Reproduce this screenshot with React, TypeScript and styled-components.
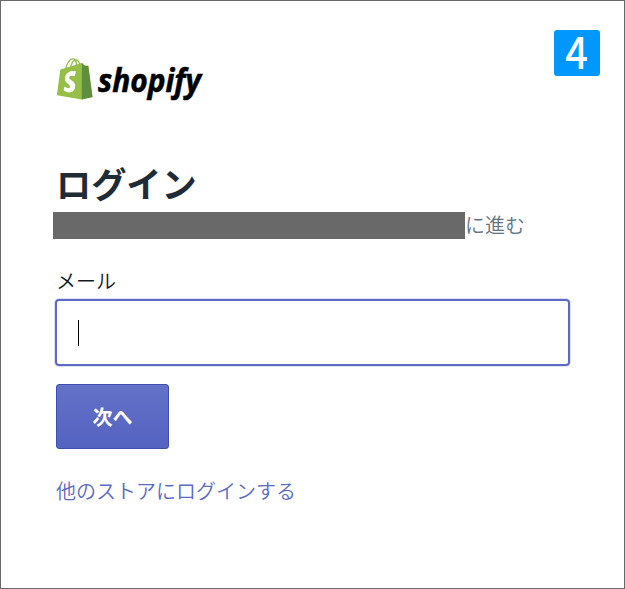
import React from "react";
import styled, { createGlobalStyle } from "styled-components";

const GlobalStyle = createGlobalStyle`
  *, *::before, *::after { box-sizing: border-box; }
  body { margin: 0; background: #fff; }
  button, input { font: inherit; }
`;

const Page = styled.main`
  position: relative;
  display: flex;
  flex-direction: column;
  align-items: flex-start;
  width: 625px;
  height: 589px;
  padding: 56px 54px 0 55px;
  border: 1px solid #696969;
  overflow: hidden;
  background: #fff;
  color: #212b36;
  font-family: "Noto Sans CJK JP", sans-serif;
  font-size: 20px;
  line-height: 28px;
`;

const StepBadge = styled.div`
  position: absolute;
  top: 29px;
  left: 553px;
  display: flex;
  align-items: center;
  justify-content: center;
  width: 46px;
  height: 46px;
  border-radius: 3px;
  background: #0098ff;
  color: #fff;
`;

const StepNumber = styled.span`
  margin-top: -7px;
  font-family: "Noto Sans CJK JP", sans-serif;
  font-weight: 500;
  font-size: 44px;
  line-height: 46px;
  transform: scaleX(0.9);
`;

const Brand = styled.svg`
  display: block;
  width: 150px;
  height: 46px;
  overflow: visible;
`;

const Title = styled.h1`
  margin: 56px 0 0;
  font-size: 35.2px;
  font-weight: 700;
  line-height: 48px;
`;

const Account = styled.div`
  display: flex;
  align-items: center;
  height: 27px;
  margin: 5px 0 0 -3px;
  color: #637381;
  font-weight: 350;
  line-height: 26px;
`;

const AccountText = styled.span`
  margin-top: -2px;
`;

const Redacted = styled.span`
  width: 412px;
  height: 27px;
  background: #696969;
`;

const Label = styled.label`
  margin-top: 28px;
  font-weight: 350;
  color: #101820;
`;

const EmailField = styled.div`
  display: flex;
  align-items: center;
  width: 515px;
  height: 67px;
  margin: 4px 0 0 -1px;
  padding: 0 21px;
  border: 2px solid #5c6ac4;
  border-radius: 4px;
  box-shadow: 0 0 0 1px #dfe1f3;
`;

const Caret = styled.span`
  width: 1px;
  height: 26px;
  background: #000;
`;

const NextButton = styled.button`
  width: 113px;
  height: 65px;
  margin-top: 18px;
  padding: 0;
  border: 1px solid #3f4eae;
  border-radius: 3px;
  background: linear-gradient(to bottom, #6371c7, #5563c1);
  box-shadow: inset 0 1px 0 #6774c8;
  color: #fff;
  font-weight: 700;
  line-height: 28px;
`;

const StoreLink = styled.a`
  margin-top: 28px;
  color: #5c6ac4;
  font-weight: 350;
  text-decoration: none;
`;

function ShopifyLogo() {
  return (
    <Brand viewBox="0 0 150 46" role="img" aria-label="shopify">
      <g transform="translate(1 1.2) scale(.327 .333)">
        <path
          fill="#95bf47"
          fillRule="evenodd"
          d="M95.9 23.9c-.1-.6-.6-1-1.1-1-.5 0-9.3-.2-9.3-.2s-7.4-7.2-8.1-7.9c-.7-.7-2.2-.5-2.7-.3 0 0-1.4.4-3.7 1.1-.4-1.3-1-2.8-1.8-4.4-2.6-5-6.5-7.7-11.1-7.7-.3 0-.6 0-1 .1-.1-.2-.3-.3-.4-.5-2-2.2-4.6-3.2-7.7-3.1-6 .2-12 4.5-16.8 12.2-3.4 5.4-6 12.2-6.7 17.5-6.9 2.1-11.7 3.6-11.8 3.7-3.5 1.1-3.6 1.2-4 4.5C9.4 40.4 0 111.2 0 111.2l75.6 13.1 33.2-8.1S96 24.5 95.9 23.9zM67.2 16.8c-1.7.5-3.7 1.1-5.9 1.8 0-3-.4-7.3-1.8-10.9 4.7.8 6.9 6 7.7 9.1zM57.2 19.9c-4 1.2-8.4 2.6-12.8 3.9 1.2-4.7 3.6-9.4 6.4-12.5 1.1-1.1 2.6-2.4 4.3-3.2 1.8 3.6 2.1 8.5 2.1 11.8zM49.1 4c1.4 0 2.6.3 3.6.9-1.6.8-3.2 2.1-4.7 3.6-3.8 4.1-6.7 10.5-7.9 16.6-3.6 1.1-7.2 2.2-10.5 3.2C31.7 18.8 39.8 4.3 49.1 4z"
        />
        <path
          fill="#5e8e3e"
          d="M94.8 22.9c-.5 0-9.3-.2-9.3-.2s-7.4-7.2-8.1-7.9c-.3-.3-.6-.4-1-.5l-.8 110 33.2-8.1S96 24.5 95.9 23.9c-.1-.6-.6-1-1.1-1z"
        />
        <path
          fill="#fff"
          d="M58 39.9l-3.8 14.4s-4.3-2-9.4-1.6c-7.5.5-7.5 5.2-7.5 6.4.4 6.4 17.3 7.8 18.3 22.9.7 11.9-6.3 20-16.4 20.6-12.2.8-18.9-6.4-18.9-6.4l2.6-11s6.7 5.1 12.1 4.7c3.5-.2 4.8-3.1 4.7-5.1-.5-8.4-14.3-7.9-15.2-21.7-.7-11.6 6.9-23.4 23.7-24.4 6.5-.5 9.8 1.2 9.8 1.2z"
        />
      </g>
      <text
        x="42"
        y="34.8"
        fill="#000"
        stroke="#000"
        strokeWidth="0.6"
        fontFamily="'Open Sans', 'Noto Sans', sans-serif"
        fontSize="33"
        fontWeight="700"
        fontStyle="italic"
        textLength="103"
        lengthAdjust="spacingAndGlyphs"
      >
        shopify
      </text>
    </Brand>
  );
}

export default function App() {
  return (
    <>
      <GlobalStyle />
      <Page>
        <ShopifyLogo />
        <Title>ログイン</Title>
        <Account>
          <Redacted />
          <AccountText>に進む</AccountText>
        </Account>
        <Label>メール</Label>
        <EmailField role="textbox" aria-label="メール">
          <Caret />
        </EmailField>
        <NextButton type="button">次へ</NextButton>
        <StoreLink href="#">他のストアにログインする</StoreLink>
        <StepBadge>
          <StepNumber>4</StepNumber>
        </StepBadge>
      </Page>
    </>
  );
}
